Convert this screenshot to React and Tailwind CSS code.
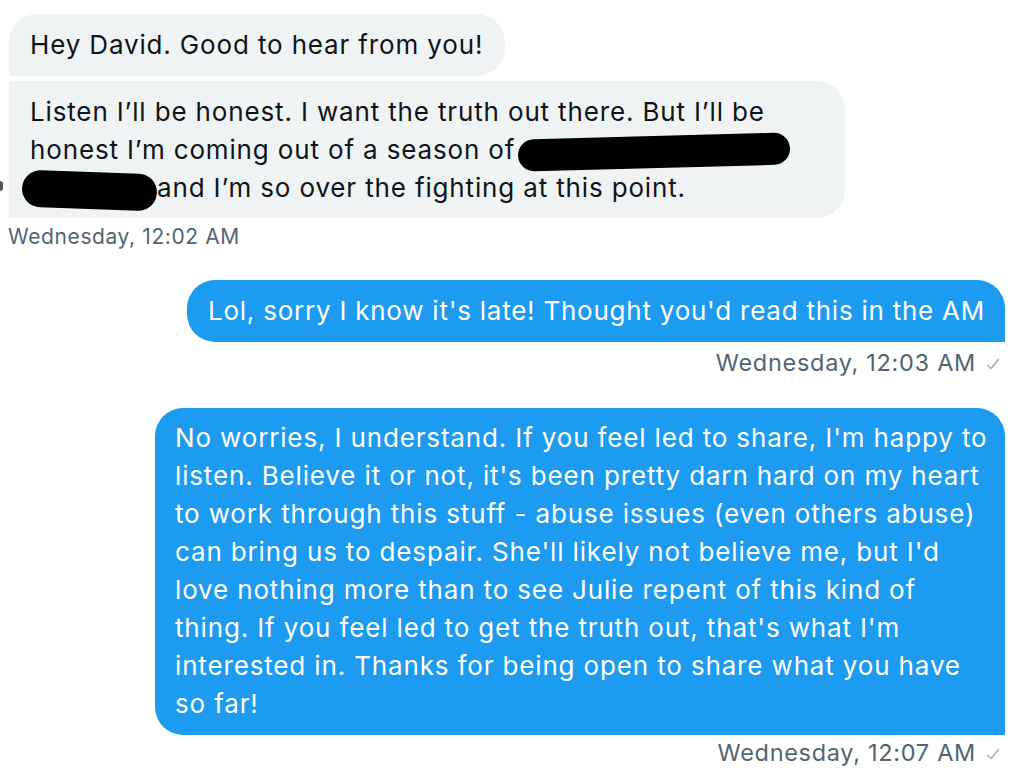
import React from "react";

const font = { fontFamily: "Inter, 'Noto Sans', sans-serif" };

function Check() {
  return (
    <svg width="16" height="16" viewBox="0 0 16 16" className="ml-[9px] mt-[2px]">
      <path d="M2.5 9.2 L6 12.5 L13.5 3.5" fill="none" stroke="#a3acb4" strokeWidth="1.5" strokeLinecap="round" strokeLinejoin="round" />
    </svg>
  );
}

export default function App() {
  return (
    <div className="relative w-[1024px] h-[775px] bg-white overflow-hidden text-[#0f1419]" style={font}>
      <div className="absolute left-0 top-[181px] w-[3px] h-[10px] rounded-r-full bg-[#555]" />
      <div className="flex flex-col pt-[14px]">
        <div className="flex flex-col items-start pl-[9px]">
          <div className="w-[496px] h-[62px] bg-[#eff3f4] rounded-[28px] rounded-bl-none pl-[21px] pt-[12px] text-[26px] tracking-[0.85px] leading-[38px] whitespace-nowrap">
            Hey David. Good to hear from you!
          </div>
          <div className="mt-[5px] w-[836px] h-[137px] bg-[#eff3f4] rounded-[28px] rounded-tl-none rounded-bl-none pl-[21px] pt-[12px] text-[26px] tracking-[0.85px] leading-[38px] whitespace-nowrap">
            <div>Listen I’ll be honest. I want the truth out there. But I’ll be</div>
            <div className="flex items-center">
              <span>honest I’m coming out of a season of</span>
              <span className="inline-block ml-[3px] w-[272px] h-[32px] bg-black rounded-full -rotate-[1.5deg] translate-y-[2px]" />
            </div>
            <div className="flex items-center -ml-[8px]">
              <span className="inline-block w-[135px] h-[37px] bg-black rounded-full rotate-[2deg] translate-y-[2px]" />
              <span>and I’m so over the fighting at this point.</span>
            </div>
          </div>
          <div className="mt-[7px] -ml-[1px] text-[21px] tracking-[0.6px] leading-[24px] text-[#536471]">Wednesday, 12:02 AM</div>
        </div>

        <div className="flex flex-col items-end pr-[19px] mt-[31px]">
          <div className="w-[818px] h-[62px] bg-[#1d9bf0] text-white rounded-[28px] rounded-br-none pl-[21px] pt-[12px] text-[26px] tracking-[0.76px] leading-[38px] whitespace-nowrap">
            Lol, sorry I know it's late! Thought you'd read this in the AM
          </div>
          <div className="flex items-center mt-[7px] mr-[4px] text-[23.5px] tracking-[0.7px] leading-[28px] text-[#536471]">
            <span>Wednesday, 12:03 AM</span>
            <Check />
          </div>

          <div className="mt-[31px] w-[850px] h-[327px] bg-[#1d9bf0] text-white rounded-[28px] rounded-br-none pl-[20px] pt-[11px] text-[26px] tracking-[0.85px] leading-[38px] whitespace-nowrap">
            <div>No worries, I understand. If you feel led to share, I'm happy to</div>
            <div>listen. Believe it or not, it's been pretty darn hard on my heart</div>
            <div>to work through this stuff - abuse issues (even others abuse)</div>
            <div>can bring us to despair. She'll likely not believe me, but I'd</div>
            <div>love nothing more than to see Julie repent of this kind of</div>
            <div>thing. If you feel led to get the truth out, that's what I'm</div>
            <div>interested in. Thanks for being open to share what you have</div>
            <div>so far!</div>
          </div>
          <div className="flex items-center mt-[4px] mr-[4px] text-[23.5px] tracking-[0.7px] leading-[28px] text-[#536471]">
            <span>Wednesday, 12:07 AM</span>
            <Check />
          </div>
        </div>
      </div>
    </div>
  );
}
